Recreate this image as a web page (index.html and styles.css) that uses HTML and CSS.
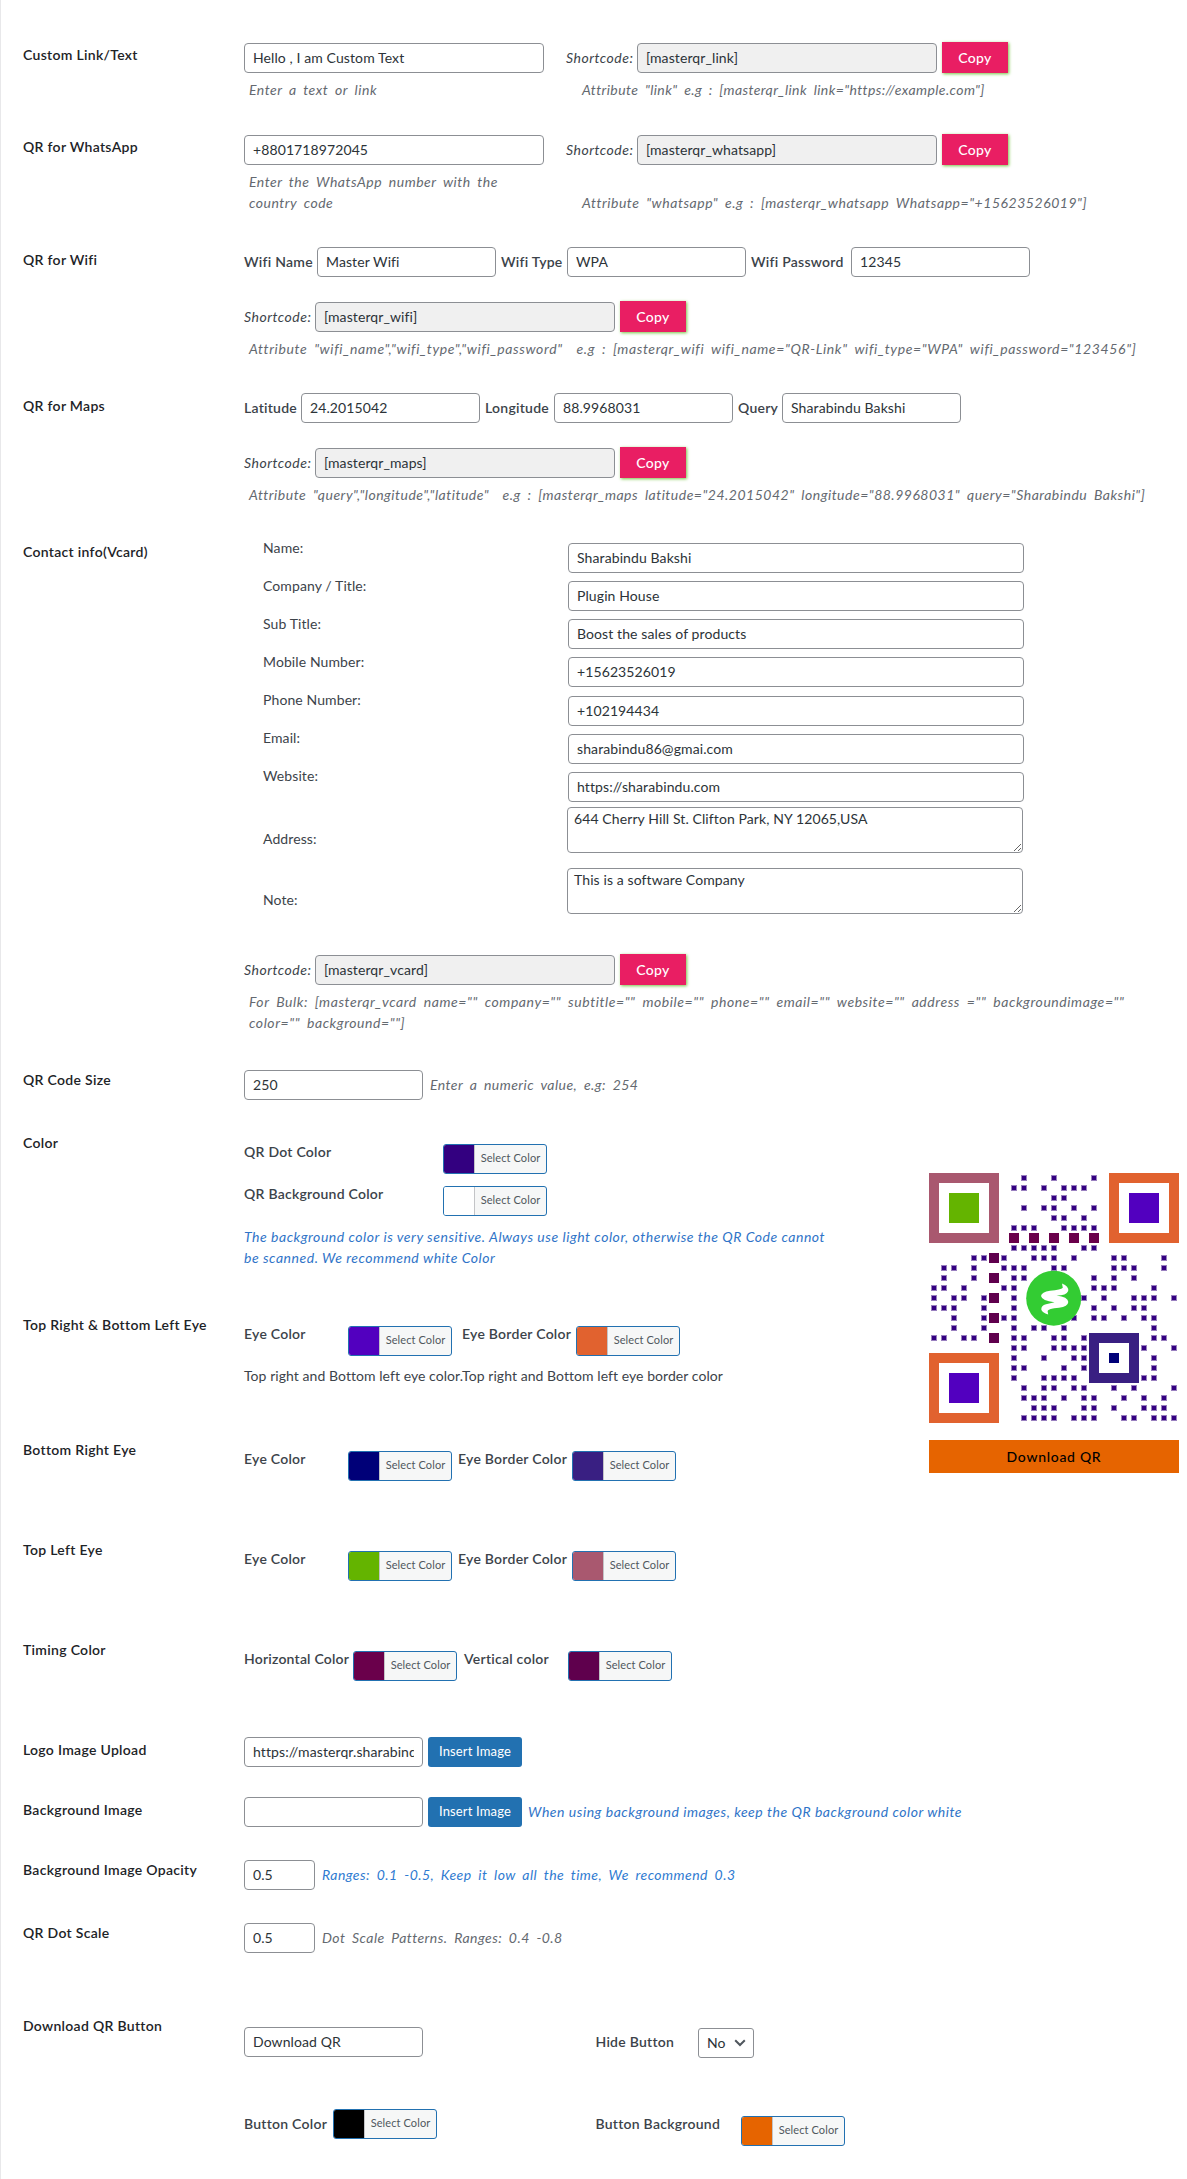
FILE: index.html
```
<!DOCTYPE html>
<html lang="en">
<head>
<meta charset="utf-8">
<title>Master QR Settings</title>
<link rel="stylesheet" href="styles.css">
</head>
<body>
<main class="page">
  <section class="row row-link">
    <h3 class="title">Custom Link/Text</h3>
    <div class="cell split">
      <input class="input wide" value="Hello , I am Custom Text">
      <div class="code-line"><span class="code-label">Shortcode:</span><input class="input wide code" readonly value="[masterqr_link]"><button class="copy">Copy</button></div>
      <p class="hint">Enter a text or link</p>
      <p class="hint attr hint-link">Attribute "link" e.g : [masterqr_link link="https://example.com"]</p>
    </div>
  </section>

  <section class="row row-whatsapp">
    <h3 class="title">QR for WhatsApp</h3>
    <div class="cell split">
      <input class="input wide" value="+8801718972045">
      <div class="code-line"><span class="code-label">Shortcode:</span><input class="input wide code" readonly value="[masterqr_whatsapp]"><button class="copy">Copy</button></div>
      <p class="hint">Enter the WhatsApp number with the country code</p>
      <p class="hint attr hint-wa">Attribute "whatsapp" e.g : [masterqr_whatsapp Whatsapp="+15623526019"]</p>
    </div>
  </section>

  <section class="row row-trio">
    <h3 class="title">QR for Wifi</h3>
    <div class="cell">
      <div class="fields">
        <label class="name w-wifi">Wifi Name</label><input class="input mid" value="Master Wifi">
        <label class="name w-type">Wifi Type</label><input class="input mid" value="WPA">
        <label class="name w-pass">Wifi Password</label><input class="input mid" value="12345">
      </div>
      <div class="code-line below"><span class="code-label">Shortcode:</span><input class="input wide code" readonly value="[masterqr_wifi]"><button class="copy">Copy</button></div>
      <p class="hint hint-wifi">Attribute "wifi_name","wifi_type","wifi_password"&nbsp; e.g : [masterqr_wifi wifi_name="QR-Link" wifi_type="WPA" wifi_password="123456"]</p>
    </div>
  </section>

  <section class="row row-trio">
    <h3 class="title">QR for Maps</h3>
    <div class="cell">
      <div class="fields">
        <label class="name w-lat">Latitude</label><input class="input mid" value="24.2015042">
        <label class="name w-lng">Longitude</label><input class="input mid" value="88.9968031">
        <label class="name w-query">Query</label><input class="input mid" value="Sharabindu Bakshi">
      </div>
      <div class="code-line below"><span class="code-label">Shortcode:</span><input class="input wide code" readonly value="[masterqr_maps]"><button class="copy">Copy</button></div>
      <p class="hint hint-maps">Attribute "query","longitude","latitude"&nbsp; e.g : [masterqr_maps latitude="24.2015042" longitude="88.9968031" query="Sharabindu Bakshi"]</p>
    </div>
  </section>

  <section class="row row-vcard">
    <h3 class="title">Contact info(Vcard)</h3>
    <div class="cell">
      <div class="vcard">
        <div class="v-row"><label>Name:</label><input class="input" value="Sharabindu Bakshi"></div>
        <div class="v-row"><label>Company / Title:</label><input class="input" value="Plugin House"></div>
        <div class="v-row"><label>Sub Title:</label><input class="input" value="Boost the sales of products"></div>
        <div class="v-row"><label>Mobile Number:</label><input class="input" value="+15623526019"></div>
        <div class="v-row"><label>Phone Number:</label><input class="input" value="+102194434"></div>
        <div class="v-row"><label>Email:</label><input class="input" value="sharabindu86@gmai.com"></div>
        <div class="v-row"><label>Website:</label><input class="input" value="https://sharabindu.com"></div>
        <div class="v-area"><label>Address:</label><textarea class="area">644 Cherry Hill St. Clifton Park, NY 12065,USA</textarea></div>
        <div class="v-area"><label>Note:</label><textarea class="area">This is a software Company</textarea></div>
      </div>
      <div class="code-line"><span class="code-label">Shortcode:</span><input class="input wide code" readonly value="[masterqr_vcard]"><button class="copy">Copy</button></div>
      <p class="hint hint-vcard">For Bulk: [masterqr_vcard name="" company="" subtitle="" mobile="" phone="" email="" website="" address ="" backgroundimage=""<br>color="" background=""]</p>
    </div>
  </section>

  <section class="row row-size">
    <h3 class="title">QR Code Size</h3>
    <div class="cell inline low"><input class="input mid" value="250"><span class="hint side">Enter a numeric value, e.g: 254</span></div>
  </section>

  <div class="design">
    <div class="design-form">
      <section class="row row-color">
        <h3 class="title">Color</h3>
        <div class="cell colors">
          <div class="pick-line tall"><label class="name w-dot">QR Dot Color</label><button class="picker"><i class="swatch" style="background:#330080"></i><span>Select Color</span></button></div>
          <div class="pick-line tall"><label class="name w-dot">QR Background Color</label><button class="picker"><i class="swatch" style="background:#ffffff"></i><span>Select Color</span></button></div>
          <p class="note">The background color is very sensitive. Always use light color, otherwise the QR Code cannot<br>be scanned. We recommend white Color</p>
        </div>
      </section>

      <section class="row row-eyes">
        <h3 class="title">Top Right &amp; Bottom Left Eye</h3>
        <div class="cell colors">
          <div class="pick-line"><label class="name w-eye">Eye Color</label><button class="picker"><i class="swatch" style="background:#5200bf"></i><span>Select Color</span></button><label class="name w-border far">Eye Border Color</label><button class="picker"><i class="swatch" style="background:#e1622f"></i><span>Select Color</span></button></div>
          <p class="text">Top right and Bottom left eye color.Top right and Bottom left eye border color</p>
        </div>
      </section>

      <section class="row row-eye">
        <h3 class="title">Bottom Right Eye</h3>
        <div class="cell colors">
          <div class="pick-line"><label class="name w-eye">Eye Color</label><button class="picker"><i class="swatch" style="background:#000078"></i><span>Select Color</span></button><label class="name w-border">Eye Border Color</label><button class="picker"><i class="swatch" style="background:#391f82"></i><span>Select Color</span></button></div>
        </div>
      </section>

      <section class="row row-eye">
        <h3 class="title">Top Left Eye</h3>
        <div class="cell colors">
          <div class="pick-line"><label class="name w-eye">Eye Color</label><button class="picker"><i class="swatch" style="background:#64b400"></i><span>Select Color</span></button><label class="name w-border">Eye Border Color</label><button class="picker"><i class="swatch" style="background:#a9586f"></i><span>Select Color</span></button></div>
        </div>
      </section>

      <section class="row row-eye">
        <h3 class="title">Timing Color</h3>
        <div class="cell colors">
          <div class="pick-line"><label class="name w-horiz">Horizontal Color</label><button class="picker"><i class="swatch" style="background:#6a004b"></i><span>Select Color</span></button><label class="name w-vert">Vertical color</label><button class="picker"><i class="swatch" style="background:#5f004d"></i><span>Select Color</span></button></div>
        </div>
      </section>
    </div>

    <aside class="preview">
      <svg id="qr" width="250" height="250" viewBox="0 0 250 250">
        <g id="dots"></g>
        <path fill="#a9586f" d="M0 0h70v70H0z"/><path fill="#fff" d="M10 10h50v50H10z"/><path fill="#64b400" d="M20 20h30v30H20z"/>
        <path fill="#e1622f" d="M180 0h70v70h-70z"/><path fill="#fff" d="M190 10h50v50h-50z"/><path fill="#5200bf" d="M200 20h30v30h-30z"/>
        <path fill="#e1622f" d="M0 180h70v70H0z"/><path fill="#fff" d="M10 190h50v50H10z"/><path fill="#5200bf" d="M20 200h30v30H20z"/>
        <path fill="#391f82" d="M160 160h50v50h-50z"/><path fill="#fff" d="M170 170h30v30h-30z"/><path fill="#000078" d="M180 180h10v10h-10z"/>
        <circle cx="124.7" cy="125.2" r="27.5" fill="#33cc33"/>
        <path fill="#fff" d="M133 110.4Q140 113 139.2 118Q137.5 122.5 127.5 122.6Q139 124 139.3 129Q139 133.5 130 134.7Q119 135.5 118.6 138L119.2 141.4Q113 139.5 112.3 136.5Q112 132.5 117 131.2L125.5 129.2Q113 128 112 123Q112.5 119 121 117.8Q132 117 133.8 114.8Z"/>
      </svg>
      <button class="download">Download QR</button>
    </aside>
  </div>

  <section class="row row-short">
    <h3 class="title">Logo Image Upload</h3>
    <div class="cell inline"><input class="input mid" value="https://masterqr.sharabindu.com/logo.png"><button class="insert">Insert Image</button></div>
  </section>

  <section class="row row-short">
    <h3 class="title">Background Image</h3>
    <div class="cell inline"><input class="input mid" value=""><button class="insert">Insert Image</button><span class="note tip">When using background images, keep the QR background color white</span></div>
  </section>

  <section class="row row-size">
    <h3 class="title">Background Image Opacity</h3>
    <div class="cell inline low"><input class="input small" value="0.5"><span class="hint side blue">Ranges: 0.1 -0.5, Keep it low all the time, We recommend 0.3</span></div>
  </section>

  <section class="row row-scale">
    <h3 class="title">QR Dot Scale</h3>
    <div class="cell inline low"><input class="input small" value="0.5"><span class="hint side">Dot Scale Patterns. Ranges: 0.4 -0.8</span></div>
  </section>

  <section class="row row-button">
    <h3 class="title">Download QR Button</h3>
    <div class="cell button-grid">
      <div><input class="input mid" value="Download QR"></div>
      <div class="inline hide-cell"><label class="name w-hide">Hide Button</label><button class="select">No<svg width="12" height="8" viewBox="0 0 12 8"><path d="M1.2 1.2 6 6l4.8-4.800" fill="none" stroke="#50575e" stroke-width="2"/></svg></button></div>
      <div class="inline top"><label class="name w-bcolor">Button Color</label><button class="picker"><i class="swatch" style="background:#000000"></i><span>Select Color</span></button></div>
      <div class="inline top bg-cell"><label class="name w-bback">Button Background</label><button class="picker"><i class="swatch" style="background:#e66400"></i><span>Select Color</span></button></div>
    </div>
  </section>
</main>
<script src="qr.js"></script>
</body>
</html>
```
FILE: styles.css
```
* { box-sizing: border-box; }
body { margin: 0; background: #fff; color: #3c434a; font: 14px/21px Lato, sans-serif; letter-spacing: .1px; }
h3, p { margin: 0; }
input, button, textarea { font: inherit; letter-spacing: inherit; margin: 0; }
.page { width: 1187px; height: 2179px; padding-top: 26px; border-left: 1px solid #e8e8ea; overflow: hidden; }

.row { display: grid; grid-template-columns: 221px 1fr; padding-left: 22px; align-items: start; }
.title { padding-top: 19px; font-size: 14px; font-weight: 600; line-height: 20px; color: #1d2327; letter-spacing: .3px; white-space: nowrap; }
.row-link { height: 92px; }
.row-whatsapp { height: 113px; }
.row-trio { height: 146px; }
.row-vcard { height: 528px; }
.row-size { height: 63px; }
.row-color { height: 182px; }
.row-eyes { height: 125px; }
.row-eye { height: 100px; }
.row-short { height: 60px; }
.row-scale { height: 93px; }
.row-button { height: 182px; }

.input { height: 30px; padding: 0 8px 1px; border: 1px solid #8c8f94; border-radius: 4px; background: #fff; color: #2c3338; outline: 0; }
.wide { width: 300px; }
.mid { width: 179px; }
.small { width: 71px; }
.code { background: #f0f0f0; }

.split { display: grid; grid-template-columns: 322px 1fr; align-items: end; padding-top: 16px; }
.code-line { display: flex; align-items: flex-end; height: 31px; }
.code-label { width: 71px; line-height: 31px; font-style: italic; letter-spacing: .5px; color: #3c434a; }
.copy { width: 66px; height: 31px; margin-left: 5px; padding: 0; border: 0; background: #e91e63; color: #fff; font-weight: 500; letter-spacing: .3px; box-shadow: 1px 1px 3px #76c442; }
.hint { padding: 6px 0 0 5px; max-width: 290px; font-style: italic; color: #646970; letter-spacing: .5px; word-spacing: 3px; }
.attr { max-width: none; padding-left: 16px; white-space: nowrap; }
.hint-link { letter-spacing: .4px; }
.hint-wa { letter-spacing: .53px; }
.hint-wifi { letter-spacing: .62px; }
.hint-vcard { letter-spacing: .57px; }

.fields { display: flex; padding-top: 16px; }
.name { font-weight: 600; letter-spacing: .25px; line-height: 20px; white-space: nowrap; }
.fields .name { padding-top: 5px; }
.fields .input + .name { margin-left: 5px; }
.w-wifi { width: 73px; }
.w-type { width: 66px; }
.w-pass { width: 100px; }
.w-lat { width: 57px; }
.w-lng { width: 69px; }
.w-query { width: 44px; }
.below { margin-top: 24px; }
.hint-wifi, .hint-maps, .hint-vcard { max-width: none; white-space: nowrap; }

.vcard { padding: 14.5px 0 25.300px 19px; }
.v-row, .v-area { display: grid; grid-template-columns: 305px 456px; align-items: start; }
.v-row { height: 38.170px; }
.v-row label { line-height: 19px; }
.v-row .input { margin-top: 5.500px; }
.v-area { grid-template-columns: 304px 456px; height: 61px; }
.v-row + .v-area { margin-top: 2.300px; }
.v-area label { padding-top: 21px; }
.area { height: 46px; padding: 1px 6px; border: 1px solid #8c8f94; border-radius: 4px; color: #2c3338; line-height: 20px; }

.inline { display: flex; align-items: center; padding-top: 16px; }
.low { padding-top: 19px; }
.hint.side { max-width: none; padding: 0 0 2px 7px; letter-spacing: .45px; white-space: nowrap; }
.hint.blue { color: #2f7bd1; }
.note { color: #2f74c8; font-style: italic; letter-spacing: .53px; white-space: nowrap; }
.tip { padding: 0 0 1px 6px; }
.text { padding-top: 8px; letter-spacing: .06px; white-space: nowrap; }

.design { display: flex; }
.design-form { width: 928px; }
.preview { display: flex; flex-direction: column; width: 250px; padding-top: 59px; }
.preview svg { display: block; }
.download { height: 33px; margin-top: 17px; border: 0; background: #e66400; color: #000; font-size: 14px; font-weight: 500; letter-spacing: .7px; padding: 0 0 1px; }

.colors { padding-top: 27.500px; }
.pick-line { display: flex; align-items: flex-start; height: 33px; }
.pick-line.tall { height: 42px; }
.pick-line .picker { margin-top: 2.500px; }
.picker { display: flex; width: 104px; height: 30px; padding: 0; border: 1px solid #2271b1; border-radius: 3px; background: #f6f7f7; color: #50575e; font-size: 11px; line-height: 26px; letter-spacing: .1px; overflow: hidden; }
.swatch { width: 31px; height: 28px; border-right: 1px solid #c3c4c7; }
.picker span { flex: 1; text-align: center; }
.w-dot { width: 199px; }
.w-eye { width: 104px; }
.w-border { width: 114px; margin-left: 6px; }
.w-border.far { margin-left: 10px; }
.w-horiz { width: 109px; letter-spacing: .2px; }
.w-vert { width: 104px; margin-left: 7px; }

.insert { width: 94px; height: 30px; margin-left: 5px; padding: 0 0 1px; border: 0; border-radius: 3px; background: #2271b1; color: #fff; font-size: 13px; letter-spacing: .15px; }

.button-grid { display: grid; grid-template-columns: 351.500px 1fr; grid-template-rows: 82px 50px; padding-top: 30px; align-items: start; }
.button-grid .inline { padding-top: 0; }
.button-grid .hide-cell { padding-top: 1px; }
.hide-cell .name { padding-bottom: 3px; }
.w-hide { width: 102.500px; }
.w-bcolor { width: 89px; }
.w-bback { width: 145.500px; }
.button-grid .bg-cell { padding-top: 5px; }
.bg-cell .name { padding-bottom: 13px; }
.select { display: flex; align-items: center; justify-content: space-between; width: 56px; height: 30px; padding: 0 7px 1px 8px; border: 1px solid #8c8f94; border-radius: 3px; background: #fff; color: #2c3338; }
```
FILE: qr.js
```
// Dark module columns for each of the 25 rows of the code.
const rows = [
  [9,12,16],[8,9,11,13,14,15],[12,13],[9,11,12,14,16],[12,13,15],[8,9,10,13,14,15,16],[],
  [8,9,10,11,12,15,16],[4,5,7,10,11,12,14,18,19,23],[1,2,4,7,8,9,12,13,18,19,20,23],
  [1,4,8,9,16,18,20],[0,1,3,7,8,16,17,18,22],[0,2,3,5,8,15,17,20,21,22,24],
  [0,1,2,5,8,16,18,20,21],[2,5,7,8,14,16,17,19,21,22],[2,5,8,10,11,13,22],
  [0,1,3,4,8,9,12,13,15,22,23],[8,9,12,13,14,15,21,24],[8,11,14,15,22],[8,9,13,15,22],
  [8,11,12,13,14,21,22],[9,11,12,14,15,18,20,24],[9,10,11,13,15,16,19,21,23],
  [10,11,12,15,16,18,21,22,23],[9,10,11,12,14,15,16,19,20,22,23,24]
];
let halo = '', core = '', across = '', down = '';
rows.forEach((cols, r) => cols.forEach(c => {
  halo += `M${c * 10 + 2} ${r * 10 + 2}h6v6h-6z`;
  core += `M${c * 10 + 3} ${r * 10 + 3}h4v4h-4z`;
}));
for (let i = 8; i <= 16; i += 2) {
  across += `M${i * 10} 60h10v10h-10z`;
  down += `M60 ${i * 10}h10v10h-10z`;
}
document.getElementById('dots').innerHTML =
  `<path fill="#9980bf" d="${halo}"/><path fill="#330080" d="${core}"/>` +
  `<path fill="#6a004b" d="${across}"/><path fill="#5f004d" d="${down}"/>`;
```
